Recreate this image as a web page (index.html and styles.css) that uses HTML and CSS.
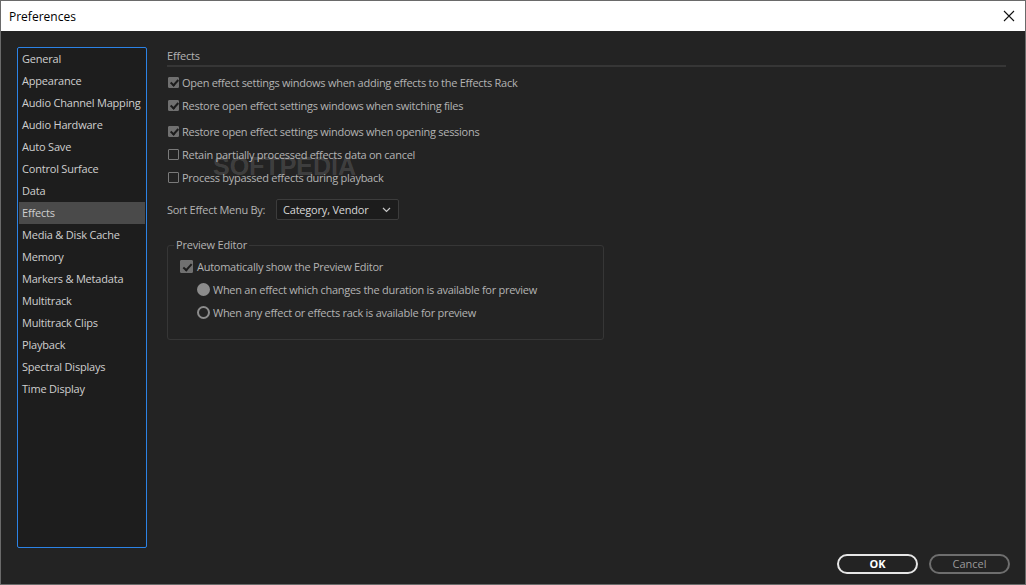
FILE: index.html
```html
<!DOCTYPE html>
<html>
<head>
<meta charset="utf-8">
<title>Preferences</title>
<link rel="stylesheet" href="styles.css">
</head>
<body>
<div class="window">
  <div class="titlebar">
    <span class="title">Preferences</span>
    <svg class="close" width="12" height="12" viewBox="0 0 12 12"><path d="M1 1L11 11M11 1L1 11" stroke="#111" stroke-width="1.1" fill="none"/></svg>
  </div>
  <div class="main">
    <ul class="sidebar">
      <li>General</li>
      <li>Appearance</li>
      <li>Audio Channel Mapping</li>
      <li>Audio Hardware</li>
      <li>Auto Save</li>
      <li>Control Surface</li>
      <li>Data</li>
      <li class="active">Effects</li>
      <li>Media &amp; Disk Cache</li>
      <li>Memory</li>
      <li>Markers &amp; Metadata</li>
      <li>Multitrack</li>
      <li>Multitrack Clips</li>
      <li>Playback</li>
      <li>Spectral Displays</li>
      <li>Time Display</li>
    </ul>
    <div class="content">
      <div class="section-title">Effects</div>
      <div class="row"><span class="cb checked"></span><span>Open effect settings windows when adding effects to the Effects Rack</span></div>
      <div class="row"><span class="cb checked"></span><span>Restore open effect settings windows when switching files</span></div>
      <div class="row gap"><span class="cb checked"></span><span>Restore open effect settings windows when opening sessions</span></div>
      <div class="row"><span class="cb"></span><span>Retain partially processed effects data on cancel</span></div>
      <div class="row"><span class="cb"></span><span>Process bypassed effects during playback</span></div>
      <div class="sort-row">
        <span class="sort-label">Sort Effect Menu By:</span>
        <div class="dropdown"><span>Category, Vendor</span>
          <svg width="9" height="6" viewBox="0 0 9 6"><path d="M1 1L4.5 4.5L8 1" stroke="#c8c8c8" stroke-width="1.2" fill="none"/></svg>
        </div>
      </div>
      <fieldset class="group">
        <legend>Preview Editor</legend>
        <div class="row big"><span class="cb cb-lg checked"></span><span>Automatically show the Preview Editor</span></div>
        <div class="row radio-row"><span class="radio filled"></span><span>When an effect which changes the duration is available for preview</span></div>
        <div class="row radio-row"><span class="radio"></span><span>When any effect or effects rack is available for preview</span></div>
      </fieldset>
    </div>
  </div>
  <div class="footer">
    <button class="btn primary">OK</button>
    <button class="btn">Cancel</button>
  </div>
  <div class="watermark">SOFTPEDIA</div>
</div>
</body>
</html>
```

FILE: styles.css
```css
* { box-sizing: border-box; }
html, body { margin: 0; padding: 0; }
body {
  width: 1026px;
  height: 585px;
  overflow: hidden;
  font-family: "Open Sans", "Noto Sans", sans-serif;
  font-size: 11px;
}
.window {
  position: relative;
  width: 1026px;
  height: 585px;
  border: 1px solid #6a6a6a;
  background: #232323;
  display: flex;
  flex-direction: column;
}
.titlebar {
  height: 30px;
  background: #ffffff;
  display: flex;
  align-items: center;
  justify-content: space-between;
  padding: 0 10px 0 8px;
  flex: none;
}
.title {
  font-size: 12px;
  color: #000;
  padding-top: 1px;
}
.close { margin-top: -1px; }
.main {
  display: flex;
  padding: 16px 19px 0 16px;
  height: 517px;
  flex: none;
}
.sidebar {
  list-style: none;
  margin: 0;
  padding: 0 1px;
  width: 130px;
  height: 501px;
  border: 1px solid #2c83e6;
  border-radius: 2px;
  background: #1d1d1d;
  flex: none;
}
.sidebar li {
  height: 22px;
  line-height: 22px;
  padding-left: 3px;
  color: #cfcfcf;
  white-space: nowrap;
  font-size: 11px;
  letter-spacing: -0.2px;
}
.sidebar li.active { background: #4a4a4a; }
.content {
  flex: 1;
  margin-left: 20px;
  color: #b3b3b3;
}
.section-title {
  height: 20px;
  line-height: 18px;
  border-bottom: 2px solid #363636;
  color: #b3b3b3;
  margin-bottom: 4px;
  letter-spacing: -0.2px;
}
.row {
  display: flex;
  align-items: center;
  height: 23px;
  white-space: nowrap;
  letter-spacing: -0.27px;
}
.row.gap { margin-top: 3px; }
.cb {
  width: 11px;
  height: 11px;
  border: 1px solid #7a7a7a;
  border-radius: 1px;
  margin-left: 1px;
  margin-right: 3px;
  flex: none;
  position: relative;
}
.cb.checked {
  background: #707070;
  border-color: #707070;
}
.cb.checked::after {
  content: "";
  position: absolute;
  left: 3px;
  top: 0px;
  width: 3px;
  height: 6px;
  border: solid #1c1c1c;
  border-width: 0 2px 2px 0;
  transform: rotate(42deg);
}
.cb-lg { width: 13px; height: 13px; margin-left: 0; margin-right: 4px; }
.cb-lg.checked::after { left: 4px; top: 1px; width: 3px; height: 7px; }
.sort-row {
  display: flex;
  align-items: center;
  margin-top: 10px;
  height: 21px;
}
.sort-label { width: 109px; letter-spacing: -0.27px; white-space: nowrap; }
.dropdown {
  width: 123px;
  height: 21px;
  background: #1c1c1c;
  border: 1px solid #3c3c3c;
  border-radius: 2px;
  display: flex;
  align-items: center;
  justify-content: space-between;
  padding: 0 7px 0 6px;
  color: #d6d6d6;
  letter-spacing: -0.2px;
}
.group {
  width: 437px;
  margin: 17px 0 0 0;
  padding: 2px 0 15px 12px;
  border: 1px solid #363636;
  border-radius: 3px;
  min-width: 0;
}
.group legend {
  padding: 0 2px;
  margin-left: -6px;
  line-height: 16px;
  color: #b3b3b3;
  letter-spacing: -0.2px;
}
.radio-row { padding-left: 17px; }
.radio {
  width: 13px;
  height: 13px;
  border-radius: 50%;
  border: 2px solid #8c8c8c;
  margin-right: 3px;
  flex: none;
}
.radio.filled { background: #8c8c8c; border-color: #8c8c8c; }
.footer {
  display: flex;
  justify-content: flex-end;
  gap: 11px;
  padding: 6px 15px 0 0;
}
.btn {
  width: 81px;
  height: 20px;
  border-radius: 10px;
  background: transparent;
  border: 2px solid #6e6e6e;
  color: #9a9a9a;
  font-family: "Open Sans", "Noto Sans", sans-serif;
  font-size: 11px;
  padding: 0;
  line-height: 16px;
}
.btn.primary {
  border-color: #e6e6e6;
  color: #ffffff;
  font-weight: 700;
}
.watermark {
  position: absolute;
  left: 212px;
  top: 153px;
  font-family: "Liberation Sans", sans-serif;
  font-weight: 700;
  font-size: 25px;
  line-height: 25px;
  color: rgba(255, 255, 255, 0.15);
  pointer-events: none;
}
```
